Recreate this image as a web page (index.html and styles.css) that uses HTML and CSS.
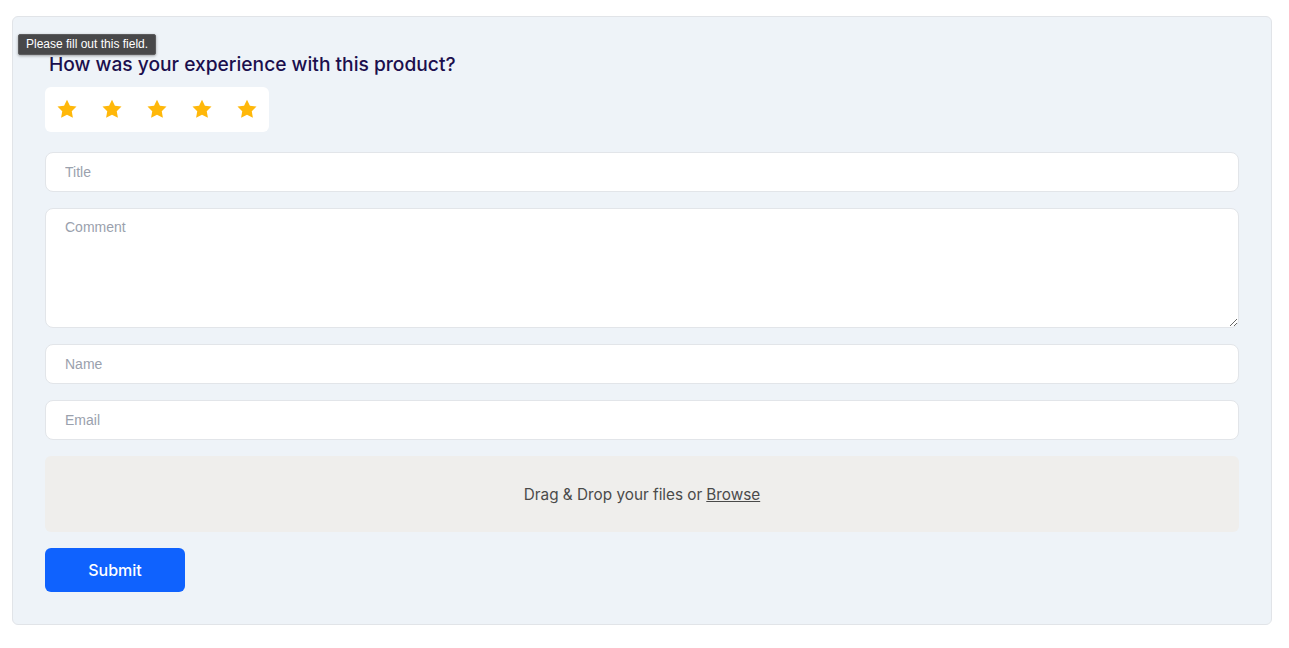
FILE: index.html
```html
<!DOCTYPE html>
<html lang="en">
<head>
<meta charset="utf-8">
<title>Review form</title>
<link rel="stylesheet" href="styles.css">
</head>
<body>
<div class="page">
  <form class="card">
    <div class="tooltip">Please fill out this field.</div>
    <h2 class="question">How was your experience with this product?</h2>
    <div class="stars">
      <svg class="star" viewBox="0 0 24 24"><path d="M12 .8l3.5 7.2 7.9 1.1-5.7 5.5 1.4 7.9L12 18.8l-7.1 3.7 1.4-7.9L.6 9.1l7.9-1.1z"/></svg>
      <svg class="star" viewBox="0 0 24 24"><path d="M12 .8l3.5 7.2 7.9 1.1-5.7 5.5 1.4 7.9L12 18.8l-7.1 3.7 1.4-7.9L.6 9.1l7.9-1.1z"/></svg>
      <svg class="star" viewBox="0 0 24 24"><path d="M12 .8l3.5 7.2 7.9 1.1-5.7 5.5 1.4 7.9L12 18.8l-7.1 3.7 1.4-7.9L.6 9.1l7.9-1.1z"/></svg>
      <svg class="star" viewBox="0 0 24 24"><path d="M12 .8l3.5 7.2 7.9 1.1-5.7 5.5 1.4 7.9L12 18.8l-7.1 3.7 1.4-7.9L.6 9.1l7.9-1.1z"/></svg>
      <svg class="star" viewBox="0 0 24 24"><path d="M12 .8l3.5 7.2 7.9 1.1-5.7 5.5 1.4 7.9L12 18.8l-7.1 3.7 1.4-7.9L.6 9.1l7.9-1.1z"/></svg>
    </div>
    <input class="field" type="text" placeholder="Title">
    <textarea class="field area" placeholder="Comment"></textarea>
    <input class="field" type="text" placeholder="Name">
    <input class="field" type="email" placeholder="Email">
    <div class="dropzone">Drag &amp; Drop your files or <span class="browse">Browse</span></div>
    <button class="submit" type="button">Submit</button>
  </form>
</div>
</body>
</html>
```
FILE: styles.css
```css
html, body {
  margin: 0;
  padding: 0;
  background: #ffffff;
}
.page {
  padding: 16px 17px 0 12px;
  font-family: Inter, "Liberation Sans", sans-serif;
}
.card {
  position: relative;
  display: flex;
  flex-direction: column;
  align-items: flex-start;
  background: #eef3f8;
  border: 1px solid #e1e4e8;
  border-radius: 6px;
  padding: 32px 32px 31px 32px;
  height: 609px;
  box-sizing: border-box;
}
.tooltip {
  position: absolute;
  left: 5px;
  top: 17px;
  background: #48484a;
  color: #ffffff;
  font-family: "Liberation Sans", Arial, sans-serif;
  font-size: 12px;
  line-height: 17px;
  padding: 1px 7px;
  border: 1px solid #5c5c5e;
  border-radius: 2px;
  box-shadow: 0 1px 3px rgba(0,0,0,0.35);
  white-space: nowrap;
}
.question {
  margin: 0 0 9px 4px;
  padding-top: 1px;
  font-size: 19.2px;
  line-height: 28px;
  font-weight: 500;
  color: #1b0f4d;
}
.stars {
  display: flex;
  gap: 25px;
  background: #ffffff;
  border-radius: 6px;
  padding: 12px 12px 13px 12px;
  margin-bottom: 20px;
}
.star {
  width: 20px;
  height: 20px;
  fill: #ffb80a;
  display: block;
}
.field {
  width: 100%;
  box-sizing: border-box;
  height: 40px;
  border: 1px solid #e2e5e9;
  border-radius: 8px;
  background: #ffffff;
  padding: 0 19px;
  margin: 0 0 16px 0;
  font-family: "Liberation Sans", Arial, sans-serif;
  font-size: 14px;
  color: #333;
  outline: none;
}
.field::placeholder {
  color: #9aa1ad;
}
.area {
  height: 120px;
  padding-top: 10px;
  resize: vertical;
  display: block;
}
.dropzone {
  width: 100%;
  box-sizing: border-box;
  height: 76px;
  background: #efeeec;
  border-radius: 6px;
  display: flex;
  align-items: center;
  justify-content: center;
  font-size: 15.3px;
  color: #4a4a4a;
  margin-bottom: 16px;
}
.browse {
  text-decoration: underline;
  margin-left: 4px;
}
.submit {
  width: 140px;
  height: 44px;
  border: none;
  border-radius: 6px;
  background: #0f62fe;
  color: #ffffff;
  font-family: Inter, "Liberation Sans", sans-serif;
  font-size: 16px;
  font-weight: 500;
  cursor: pointer;
}
```
